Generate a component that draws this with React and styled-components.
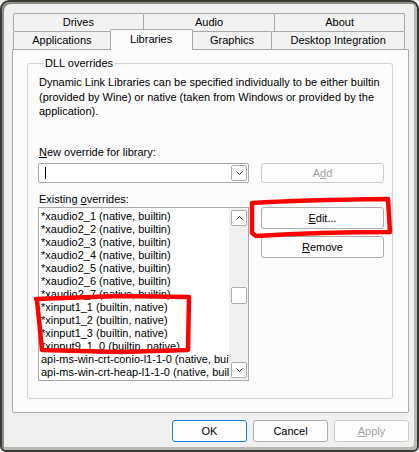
import React from "react";
import styled, { createGlobalStyle } from "styled-components";

const GlobalStyle = createGlobalStyle`
  html, body {
    margin: 0;
    padding: 0;
    background: #f0f0f0;
  }
  body {
    font-family: "Liberation Sans", Arial, sans-serif;
    font-size: 11px;
    color: #000;
  }
`;

const overrides = [
  "*xaudio2_1 (native, builtin)",
  "*xaudio2_2 (native, builtin)",
  "*xaudio2_3 (native, builtin)",
  "*xaudio2_4 (native, builtin)",
  "*xaudio2_5 (native, builtin)",
  "*xaudio2_6 (native, builtin)",
  "*xaudio2_7 (native, builtin)",
  "*xinput1_1 (builtin, native)",
  "*xinput1_2 (builtin, native)",
  "*xinput1_3 (builtin, native)",
  "*xinput9_1_0 (builtin, native)",
  "api-ms-win-crt-conio-l1-1-0 (native, builtin)",
  "api-ms-win-crt-heap-l1-1-0 (native, builtin)",
];

const topTabs = [
  { label: "Drives", width: 131 },
  { label: "Audio", width: 133 },
  { label: "About", width: 131 },
];

const bottomTabs = [
  { label: "Applications", width: 98 },
  { label: "Libraries", width: 83, active: true },
  { label: "Graphics", width: 81 },
  { label: "Desktop Integration", width: 134 },
];

function Chevron({ up }) {
  return (
    <svg width="7" height="4" viewBox="0 0 7 4">
      <path
        d={up ? "M0.5 3.5 L3.5 0.5 L6.5 3.5" : "M0.5 0.5 L3.5 3.5 L6.5 0.5"}
        fill="none"
        stroke="#333"
        strokeWidth="1"
      />
    </svg>
  );
}

function App() {
  return (
    <>
      <GlobalStyle />
      <Window>
        <TabStrip>
          <TabRow>
            {topTabs.map((t) => (
              <Tab key={t.label} $width={t.width}>
                {t.label}
              </Tab>
            ))}
          </TabRow>
          <TabRow>
            {bottomTabs.map((t) => (
              <Tab key={t.label} $width={t.width} $active={t.active}>
                {t.label}
              </Tab>
            ))}
          </TabRow>
        </TabStrip>

        <Panel>
          <GroupBox>
            <Legend>DLL overrides</Legend>
            <Description>
              Dynamic Link Libraries can be specified individually to be either builtin
              <br />
              (provided by Wine) or native (taken from Windows or provided by the
              <br />
              application).
            </Description>

            <OverrideGrid>
              <FieldLabel>
                <Key>N</Key>ew override for library:
              </FieldLabel>
              <Combo>
                <Caret />
                <DropButton>
                  <Chevron />
                </DropButton>
              </Combo>
              <PushButton $disabled>
                A<Key>d</Key>d
              </PushButton>

              <FieldLabel $gap>
                Existing <Key>o</Key>verrides:
              </FieldLabel>
              <ListBox>
                <Items>
                  {overrides.map((o) => (
                    <Item key={o}>{o}</Item>
                  ))}
                </Items>
                <ScrollBar>
                  <ScrollArrow>
                    <Chevron up />
                  </ScrollArrow>
                  <Track>
                    <Thumb $offset={61} />
                  </Track>
                  <ScrollArrow>
                    <Chevron />
                  </ScrollArrow>
                </ScrollBar>
              </ListBox>
              <ButtonStack>
                <PushButton $tall>
                  <Key>E</Key>dit...
                </PushButton>
                <PushButton $tall>
                  <Key>R</Key>emove
                </PushButton>
              </ButtonStack>
            </OverrideGrid>
          </GroupBox>
        </Panel>

        <Footer>
          <DialogButton $default>OK</DialogButton>
          <DialogButton>Cancel</DialogButton>
          <DialogButton $disabled>
            <Key>A</Key>pply
          </DialogButton>
        </Footer>

        <Annotations width="419" height="452" viewBox="0 0 419 452">
          <path d="M252 203 Q300 200 388 199 L390 232 Q320 232 256 236 L252 233 Z" />
          <path d="M36 299 L120 296 L189 297 L188 350 L120 352 L42 350 L37 300" />
        </Annotations>
      </Window>
    </>
  );
}

const Window = styled.div`
  position: relative;
  box-sizing: border-box;
  width: 419px;
  height: 452px;
  padding: 11px 8px 0 10px;
  background: #f0f0f0;
  border: 2px solid #3b3b38;
  border-radius: 9px 9px 6px 6px;
  box-shadow: inset 2px 2px 0 #8e8e86, inset -3px -3px 0 #b9b9b2;
  display: flex;
  flex-direction: column;
`;

const TabStrip = styled.div`
  display: flex;
  flex-direction: column;
  padding: 0 4px 0 1px;
`;

const TabRow = styled.div`
  display: flex;
  height: 18px;
`;

const Tab = styled.div`
  position: relative;
  box-sizing: border-box;
  width: ${(p) => p.$width}px;
  height: ${(p) => (p.$active ? 21 : 18)}px;
  margin-top: ${(p) => (p.$active ? -2 : 0)}px;
  margin-left: -1px;
  &:first-child {
    margin-left: 0;
  }
  z-index: ${(p) => (p.$active ? 2 : 1)};
  border: 1px solid #a9a9a9;
  border-bottom: none;
  border-radius: 2px 2px 0 0;
  background: ${(p) => (p.$active ? "#fcfcfc" : "#f2f2f2")};
  display: flex;
  align-items: ${(p) => (p.$active ? "flex-start" : "center")};
  padding-top: ${(p) => (p.$active ? 3 : 0)}px;
  justify-content: center;
  line-height: 13px;
  white-space: nowrap;
`;

const Panel = styled.div`
  box-sizing: border-box;
  width: 397px;
  height: 364px;
  padding: 7px 15px 0 14px;
  background: #fcfcfc;
  border: 1px solid #a9a9a9;
  border-radius: 0 0 2px 2px;
`;

const GroupBox = styled.fieldset`
  box-sizing: border-box;
  height: 342px;
  margin: 0;
  padding: 5px 8px 0 11px;
  border: 1px solid #d4d4d4;
  border-radius: 3px;
`;

const Legend = styled.legend`
  margin-left: 5px;
  padding: 0 1px;
  line-height: 13px;
`;

const Description = styled.p`
  margin: 0;
  line-height: 14.5px;
  white-space: nowrap;
`;

const OverrideGrid = styled.div`
  display: grid;
  grid-template-columns: 211px 123px;
  column-gap: 12px;
  margin: 27px 0 0 -1px;
`;

const FieldLabel = styled.div`
  grid-column: 1 / 3;
  padding-left: 1px;
  line-height: 13px;
  margin-top: ${(p) => (p.$gap ? 10 : 0)}px;
  margin-bottom: ${(p) => (p.$gap ? 1 : 4)}px;
`;

const Key = styled.span`
  text-decoration: underline;
`;

const Combo = styled.div`
  grid-column: 1;
  box-sizing: border-box;
  height: 20px;
  border: 1px solid #a9a9a9;
  border-radius: 2px;
  background: #fff;
  display: flex;
  align-items: center;
  justify-content: space-between;
  padding: 0 1px 0 6px;
`;

const Caret = styled.span`
  width: 1px;
  height: 12px;
  background: #000;
`;

const DropButton = styled.span`
  box-sizing: border-box;
  width: 16px;
  height: 16px;
  border: 1px solid #adadad;
  border-radius: 2px;
  background: #fff;
  display: flex;
  align-items: center;
  justify-content: center;
`;

const ButtonStack = styled.div`
  grid-column: 2;
  display: flex;
  flex-direction: column;
  gap: 7px;
  align-self: start;
`;

const PushButton = styled.div`
  grid-column: 2;
  box-sizing: border-box;
  height: ${(p) => (p.$tall ? 22 : 20)}px;
  border: 1px solid ${(p) => (p.$disabled ? "#cccccc" : "#adadad")};
  border-radius: 3px;
  background: #fdfdfd;
  color: ${(p) => (p.$disabled ? "#a3a3a3" : "#000")};
  display: flex;
  align-items: center;
  justify-content: center;
`;

const ListBox = styled.div`
  grid-column: 1;
  box-sizing: border-box;
  height: 174px;
  border: 1px solid #a9a9a9;
  background: #fff;
  display: flex;
`;

const Items = styled.div`
  flex: 1;
  min-width: 0;
  overflow: hidden;
  padding: 2px 0 0 2px;
`;

const Item = styled.div`
  line-height: 13px;
  white-space: nowrap;
`;

const ScrollBar = styled.div`
  box-sizing: border-box;
  width: 19px;
  background: #f0f0f0;
  padding: 2px 1px 2px 2px;
  display: flex;
  flex-direction: column;
`;

const ScrollArrow = styled.div`
  box-sizing: border-box;
  height: 16px;
  border: 1px solid #adadad;
  border-radius: 2px;
  background: #fff;
  display: flex;
  align-items: center;
  justify-content: center;
`;

const Track = styled.div`
  flex: 1;
`;

const Thumb = styled.div`
  box-sizing: border-box;
  height: 17px;
  margin-top: ${(p) => p.$offset}px;
  border: 1px solid #adadad;
  border-radius: 2px;
  background: #fff;
`;

const Footer = styled.div`
  display: flex;
  justify-content: flex-end;
  gap: 6px;
  margin-top: 7px;
`;

const DialogButton = styled.div`
  box-sizing: border-box;
  width: 75px;
  height: 22px;
  border: 1px solid
    ${(p) => (p.$default ? "#1c7ee0" : p.$disabled ? "#cccccc" : "#adadad")};
  border-radius: 3px;
  background: #fdfdfd;
  color: ${(p) => (p.$disabled ? "#a3a3a3" : "#000")};
  display: flex;
  align-items: center;
  justify-content: center;
`;

const Annotations = styled.svg`
  position: absolute;
  top: -2px;
  left: -2px;
  pointer-events: none;
  fill: none;
  stroke: #ff0000;
  stroke-width: 4.5;
  stroke-linejoin: round;
  stroke-linecap: round;
`;

export default App;
